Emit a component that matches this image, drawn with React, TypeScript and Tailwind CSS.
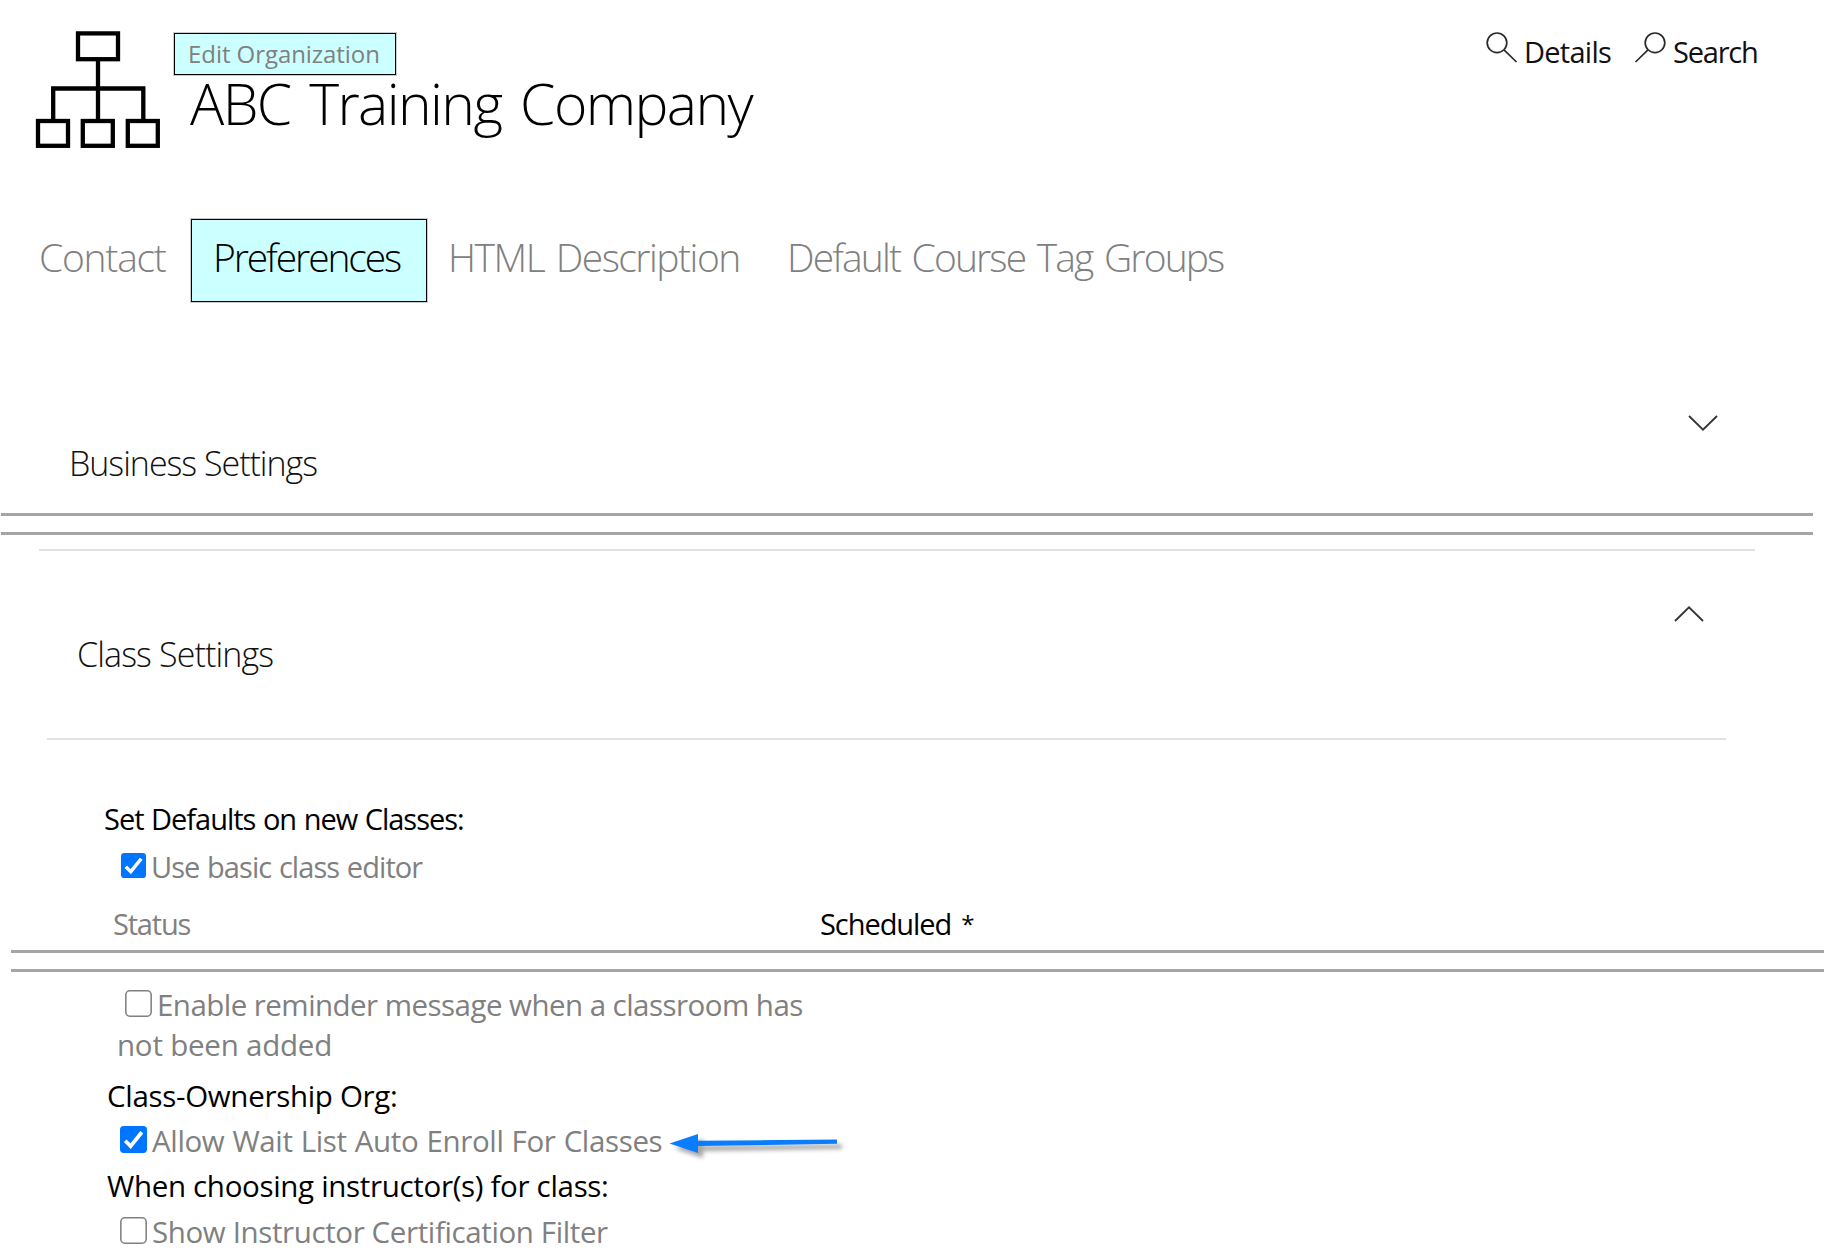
import type { ReactNode } from 'react';

function OrgChartIcon() {
  return (
    <svg width="126" height="118" viewBox="0 0 126 118" fill="none" stroke="#000" strokeWidth="4.3" className="shrink-0">
      <rect x="43" y="2.4" width="40" height="25.8" />
      <path d="M63 28V89.4M18.2 89.4V57.5H108.3V89.4" />
      <rect x="3" y="90" width="30" height="24.8" />
      <rect x="47.8" y="90" width="30" height="24.8" />
      <rect x="92.8" y="90" width="30" height="24.8" />
    </svg>
  );
}

function Magnifier({ flipped = false }: { flipped?: boolean }) {
  return (
    <svg width="32" height="32" viewBox="0 0 32 32" fill="none" stroke="#2a2a2a" strokeWidth="1.7" className={flipped ? 'shrink-0 -scale-x-100' : 'shrink-0'}>
      <circle cx="11" cy="11.8" r="9.8" />
      <path d="M18 18.8L30.5 31" />
    </svg>
  );
}

function Chevron({ up = false }: { up?: boolean }) {
  return (
    <svg width="30" height="16" viewBox="0 0 30 16" fill="none" stroke="#333" strokeWidth="1.8" className="shrink-0">
      <path d={up ? 'M1 15L15 1.3L29 15' : 'M1 1L15 14.7L29 1'} />
    </svg>
  );
}

function Checkbox({ checked = false, size }: { checked?: boolean; size: number }) {
  return (
    <svg width={size} height={size} viewBox="0 0 26 26" fill="none" className="shrink-0">
      {checked ? (
        <>
          <rect width="26" height="26" rx="3.5" fill="#0075ff" />
          <path d="M5 14.2L10.2 19.4L21 6" stroke="#fff" strokeWidth="3.6" />
        </>
      ) : (
        <rect x="0.8" y="0.8" width="24.4" height="24.4" rx="3.8" stroke="#808080" strokeWidth="1.5" />
      )}
    </svg>
  );
}

function DoubleRule({ className }: { className: string }) {
  return <div className={`h-[22px] border-y-[3px] border-[#a5a5a5] ${className}`} />;
}

function Line({ className, children }: { className: string; children: ReactNode }) {
  return <div className={`flex h-10 items-start leading-10 whitespace-nowrap ${className}`}>{children}</div>;
}

export default function App() {
  return (
    <div className="flex h-[1254px] w-[1825px] flex-col overflow-hidden bg-white font-['Open_Sans',sans-serif] text-black">
      <header className="flex h-[219px] shrink-0 items-start pt-[31px] pl-[35px] whitespace-nowrap">
        <OrgChartIcon />
        <div className="ml-[13px] flex flex-col items-start">
          <div className="mt-[2px] h-[42px] w-[222px] border border-black bg-[#ccffff] pl-[13px] text-[24px] leading-[40px] tracking-[-0.06px] text-[#808080] shadow-[0_0_0_1px_rgba(0,0,0,0.2)]">
            Edit Organization
          </div>
          <h1 className="-mt-[12px] pl-[16px] text-[57px] leading-[80px] font-light tracking-[-1.6px] [word-spacing:5.5px]">
            ABC Training Company
          </h1>
        </div>
        <nav className="ml-auto flex w-[339px] text-[29px] leading-[42px] text-[#111]">
          <Magnifier />
          <span className="ml-[6px] w-[110px] tracking-[-0.74px]">Details</span>
          <Magnifier flipped />
          <span className="ml-[7px] tracking-[-1.2px]">Search</span>
        </nav>
      </header>

      <nav className="flex h-[83px] shrink-0 pl-[39px] text-[39px] leading-[76px] font-light whitespace-nowrap text-[#808080]">
        <div className="w-[152px] tracking-[-1.25px]">Contact</div>
        <div className="w-[236px] border border-black bg-[#ccffff] pl-[21px] leading-[74px] tracking-[-2.1px] text-black shadow-[0_0_0_1px_rgba(0,0,0,0.2)]">Preferences</div>
        <div className="w-[359px] pl-[21px] tracking-[-1.51px] [word-spacing:3px]">HTML Description</div>
        <div className="pl-px tracking-[-1.88px] [word-spacing:3.3px]">Default Course Tag Groups</div>
      </nav>

      <section className="flex h-[211px] shrink-0 items-start justify-between pr-[107px] pl-[69px]">
        <h2 className="mt-[141px] text-[34px] leading-10 font-light tracking-[-1.02px] text-[#111]">Business Settings</h2>
        <div className="mt-[113px]"><Chevron /></div>
      </section>
      <DoubleRule className="mr-[12px] ml-px shrink-0" />

      <div className="mt-[14px] mr-[70px] ml-[39px] h-[2px] shrink-0 bg-[#e1e1e1]" />
      <section className="flex h-[187px] shrink-0 items-start justify-between pr-[121px] pl-[77px]">
        <h2 className="mt-[83px] text-[34px] leading-10 font-light tracking-[-0.88px] text-[#111]">Class Settings</h2>
        <div className="mt-[55px]"><Chevron up /></div>
      </section>
      <div className="mr-[99px] ml-[47px] h-[2px] shrink-0 bg-[#e1e1e1]" />

      <section className="h-[210px] shrink-0 pt-[59px] text-[29px]">
        <Line className="pl-[104px] tracking-[-1.01px] [word-spacing:1px]">Set Defaults on new Classes:</Line>
        <Line className="mt-2 pl-[121px] tracking-[-0.93px] [word-spacing:1px] text-[#808080]">
          <div className="mt-[6px] mr-[5px]"><Checkbox checked size={25} /></div>
          Use basic class editor
        </Line>
        <Line className="mt-[17px] pl-[113px]">
          <span className="w-[707px] tracking-[-1.2px] text-[#808080]">Status</span>
          <span className="tracking-[-1.05px]">Scheduled</span>
          <span className="ml-[10px] text-[24px]">*</span>
        </Line>
      </section>
      <DoubleRule className="mr-px ml-[11px] shrink-0" />

      <section className="shrink-0 pt-[13px] text-[29.5px]">
        <Line className="pl-[125px] tracking-[-0.54px] text-[#808080]">
          <div className="mt-[5px] mr-[5px]"><Checkbox size={27} /></div>
          Enable reminder message when a classroom has
        </Line>
        <Line className="pl-[117px] tracking-[-0.22px] text-[#808080]">not been added</Line>
        <Line className="mt-[11px] pl-[107px] tracking-[-0.31px]">Class-Ownership Org:</Line>
        <Line className="mt-[5px] pl-[120px] tracking-[-0.36px] [word-spacing:0.8px] text-[#808080]">
          <div className="mt-[5px] mr-[5px]"><Checkbox checked size={27} /></div>
          Allow Wait List Auto Enroll For Classes
          <svg width="180" height="32" viewBox="0 0 180 32" className="mt-[8px] ml-[7px] shrink-0 overflow-visible drop-shadow-[5px_5px_2px_rgba(0,0,0,0.35)]">
            <path d="M0.5 14.5L29 5V11.8L168 10.6V14.8L29 17V24Z" fill="#0a7dff" />
          </svg>
        </Line>
        <Line className="mt-[5px] pl-[107px] tracking-[-0.32px]">When choosing instructor(s) for class:</Line>
        <Line className="mt-[6px] pl-[120px] tracking-[-0.38px] text-[#808080]">
          <div className="mt-[5px] mr-[5px]"><Checkbox size={27} /></div>
          Show Instructor Certification Filter
        </Line>
      </section>
    </div>
  );
}
